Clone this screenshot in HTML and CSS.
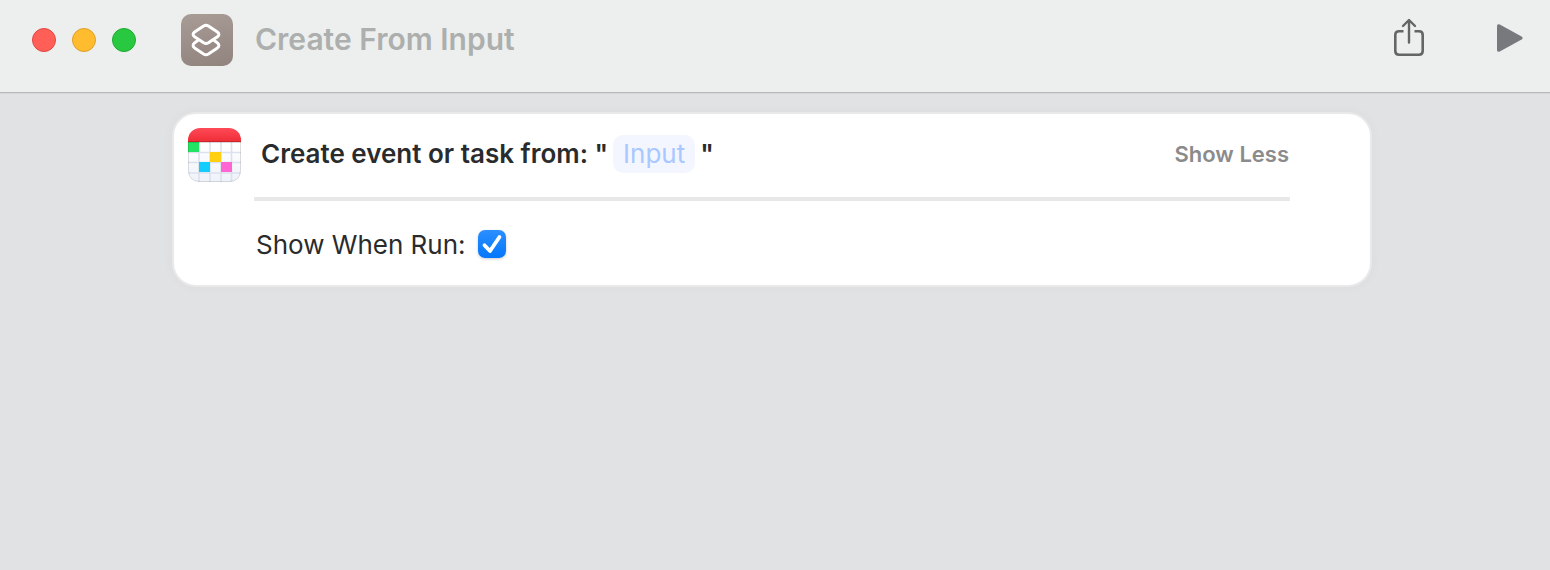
FILE: index.html
```html
<!DOCTYPE html>
<html lang="en">
<head>
    <meta charset="UTF-8">
    <meta name="viewport" content="width=device-width, initial-scale=1.0">
    <title>Create From Input</title>
    <link rel="stylesheet" href="styles.css">
</head>
<body>
    <header class="toolbar">
        <div class="window-buttons">
            <button type="button" class="dot close" aria-label="Close"></button>
            <button type="button" class="dot minimize" aria-label="Minimize"></button>
            <button type="button" class="dot zoom" aria-label="Zoom"></button>
        </div>
        <div class="app-icon">
            <svg width="52" height="52" viewBox="0 0 52 52" fill="none" stroke="#fff" stroke-width="3" stroke-linejoin="round" stroke-linecap="round">
                <path d="M22.6 12 Q25 10.6 27.4 12 L36.4 18 Q39.4 20.4 36.4 22.8 L27.4 28.8 Q25 30.2 22.6 28.8 L13.6 22.8 Q10.6 20.4 13.6 18 Z"/>
                <path d="M16.4 26.8 L13.6 28.9 Q10.6 31.4 13.6 33.9 L22.6 39.9 Q25 41.4 27.4 39.9 L36.4 33.9 Q39.4 31.4 36.4 28.9 L33.6 26.8"/>
            </svg>
        </div>
        <h1 class="title">Create From Input</h1>
        <div class="actions">
            <button type="button" class="action" aria-label="Share">
                <svg width="32" height="40" viewBox="0 0 32 40" fill="none" stroke="#636664" stroke-width="2.6" stroke-linecap="round" stroke-linejoin="round">
                    <path d="M10.5 13.3 H6 Q2.3 13.3 2.3 17 V33 Q2.3 36.7 6 36.7 H26 Q29.7 36.7 29.7 33 V17 Q29.7 13.3 26 13.3 H21.5" stroke-linecap="butt"/>
                    <path d="M16 24.5 V2.5 M10 8 L16 2 L22 8" stroke-width="2.4"/>
                </svg>
            </button>
            <button type="button" class="action" aria-label="Run">
                <svg width="26" height="30" viewBox="0 0 26 30" fill="#78797d">
                    <path d="M0 3.2 Q0 0.2 2.8 1.6 L24.6 13.4 Q26.6 15 24.6 16.6 L2.8 28.4 Q0 29.8 0 26.8 Z"/>
                </svg>
            </button>
        </div>
    </header>

    <main class="workflow">
        <section class="card">
            <svg class="calendar-icon" width="54" height="54" viewBox="0 0 54 54">
                <defs>
                    <linearGradient id="red" x1="0" y1="0" x2="0" y2="1">
                        <stop offset="0" stop-color="#ff4a58"/>
                        <stop offset="1" stop-color="#ee2c36"/>
                    </linearGradient>
                    <linearGradient id="paper" x1="0" y1="0" x2="0" y2="1">
                        <stop offset="0.3" stop-color="#ffffff"/>
                        <stop offset="1" stop-color="#eef2f9"/>
                    </linearGradient>
                    <clipPath id="tile"><rect width="53" height="54" rx="12"/></clipPath>
                </defs>
                <g clip-path="url(#tile)">
                    <rect width="54" height="54" fill="url(#paper)"/>
                    <path d="M11 14 V54 M22 14 V54 M33 14 V54 M43.5 14 V54 M0 24.5 H54 M0 34.5 H54 M0 45 H54" stroke="#dbe1ed" stroke-width="1.6"/>
                    <rect y="14" width="11" height="10" fill="#21e464"/>
                    <rect x="22" y="24" width="11" height="10" fill="#ffd012"/>
                    <rect x="11" y="34" width="11" height="10" fill="#14cdfd"/>
                    <rect x="33" y="34" width="11" height="10" fill="#ff66d4"/>
                    <rect width="54" height="14" fill="url(#red)"/>
                    <rect y="13" width="54" height="1" fill="#cc242c"/>
                    <rect y="14" width="54" height="1" fill="#000" opacity="0.15"/>
                </g>
                <path d="M0.5 14 V42 Q0.5 53.5 12 53.5 H41 Q52.5 53.5 52.5 42 V14" fill="none" stroke="#000" stroke-opacity="0.12"/>
            </svg>
            <div class="card-content">
                <div class="summary">
                    <div class="phrase">Create event or task from: "<button type="button" class="token">Input</button>"</div>
                    <button type="button" class="show-less">Show Less</button>
                </div>
                <div class="option">
                    <label for="showWhenRun">Show When Run:</label>
                    <span class="checkbox">
                        <input type="checkbox" id="showWhenRun" checked>
                        <svg class="tick" width="28" height="28" viewBox="0 0 28 28" fill="none" stroke="#fff" stroke-width="3.8" stroke-linecap="round" stroke-linejoin="round">
                            <path d="M6.5 15.2 L12 21 L21.5 7"/>
                        </svg>
                    </span>
                </div>
            </div>
        </section>
    </main>
</body>
</html>
```

FILE: styles.css
```css
*{
    box-sizing: border-box;
}
body{
    font-family: Inter, "Liberation Sans", sans-serif;
    background-color: #e0e2e4;
    color: #2a2b2c;
    margin: 0;
    min-height: 100vh;
}
button{
    font: inherit;
    border: none;
    padding: 0;
    background: none;
    cursor: pointer;
}
svg{
    display: block;
}

/* toolbar */
.toolbar{
    display: flex;
    align-items: flex-start;
    padding: 14px 27px 26px 32px;
    background-color: #ecefee;
    border-bottom: 1px solid #b6b8bc;
    box-shadow: 0 1px 0 #d6d8da;
}
.window-buttons{
    display: flex;
    gap: 16px;
    padding-top: 14px;
}
.dot{
    width: 24px;
    height: 24px;
    border-radius: 50%;
    border: 1px solid;
}
.close{
    background-color: #ff5f57;
    border-color: #e2463f;
}
.minimize{
    background-color: #febc2e;
    border-color: #e0a028;
}
.zoom{
    background-color: #28c840;
    border-color: #1fab2f;
}
.app-icon{
    width: 52px;
    height: 52px;
    margin-left: 45px;
    border-radius: 10px;
    background: linear-gradient(170deg, #a89c97, #91837d);
}
.title{
    flex: 1;
    margin: 0 0 0 22px;
    font-size: 30px;
    font-weight: 600;
    line-height: 50px;
    color: #acafad;
}
.actions{
    display: flex;
    align-items: center;
    gap: 72px;
    padding-top: 4px;
}

/* action card */
.workflow{
    padding: 19px 178px 20px 172px;
}
.card{
    display: flex;
    gap: 12px;
    padding: 14px 80px 0 14px;
    background-color: white;
    border: 2px solid #e9e9ea;
    border-radius: 24px;
    box-shadow: 0 0 12px rgba(0, 0, 0, 0.03);
}
.calendar-icon{
    flex: none;
}
.card-content{
    flex: 1;
}
.summary{
    display: flex;
    justify-content: space-between;
    align-items: center;
    padding: 7px 1px 24px 7px;
    border-bottom: 4px solid #e8e8e8;
}
.phrase{
    font-size: 26px;
    font-weight: 600;
    line-height: 38px;
}
.token{
    height: 38px;
    margin: 0 5px;
    padding: 0 10px;
    border-radius: 10px;
    background-color: #f3f6ff;
    color: #a9c8ff;
    font-weight: 400;
}
.show-less{
    font-size: 22px;
    font-weight: 600;
    color: #8b8b8b;
}
.option{
    display: flex;
    align-items: center;
    gap: 12px;
    height: 84px;
    padding: 2px 0 0 2px;
    font-size: 26px;
}
.checkbox{
    position: relative;
}
.checkbox input{
    display: block;
    appearance: none;
    width: 28px;
    height: 28px;
    margin: 0;
    border-radius: 7px;
    background: white;
    box-shadow: 0 1px 3px rgba(0, 0, 0, 0.2);
}
.checkbox input:checked{
    background: linear-gradient(#2b8fff, #0477fb);
}
.tick{
    position: absolute;
    top: 0;
    left: 0;
    pointer-events: none;
}
.checkbox input:not(:checked) + .tick{
    display: none;
}
```
